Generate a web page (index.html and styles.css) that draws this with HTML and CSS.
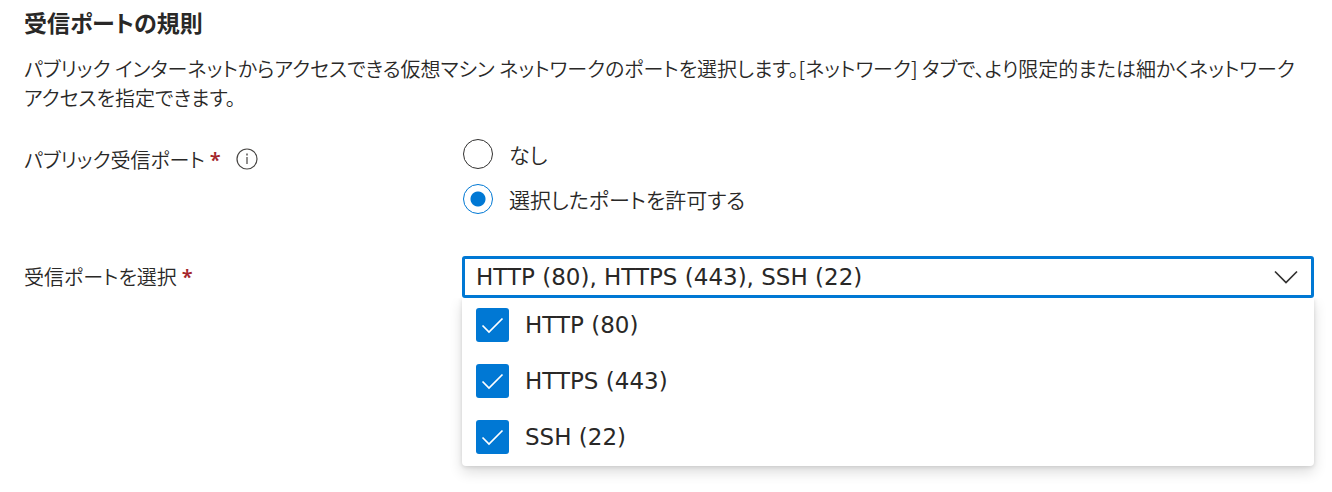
FILE: index.html
```
<!DOCTYPE html>
<html lang="ja">
<head>
    <meta charset="UTF-8">
    <meta name="viewport" content="width=device-width, initial-scale=1.0">
    <title>受信ポートの規則</title>
    <link rel="stylesheet" href="styles.css">
</head>
<body>

    <form class="ports">
        <h2>受信ポートの規則</h2>
        <p>パブリック インターネットからアクセスできる仮想マシン ネットワークのポートを選択します。[ネットワーク] タブで、より限定的または細かくネットワーク アクセスを指定できます。</p>

        <div class="row radio-row" role="radiogroup" aria-labelledby="publicLabel">
            <div class="label">
                <span id="publicLabel">パブリック受信ポート</span>
                <span class="required">*</span>
                <svg class="info" viewBox="0 0 22 22" fill="none" stroke="#484644">
                    <circle cx="11" cy="11" r="10" stroke-width="1.2"/>
                    <path d="M11 9v7" stroke-width="1.2"/>
                    <path d="M11 5.5v2" stroke-width="1.4"/>
                </svg>
            </div>
            <div class="radios">
                <label><input type="radio" name="publicPorts" value="none">なし</label>
                <label><input type="radio" name="publicPorts" value="allow" checked>選択したポートを許可する</label>
            </div>
        </div>

        <div class="row">
            <div class="label">
                <label for="portSelect">受信ポートを選択</label>
                <span class="required">*</span>
            </div>
            <div class="dropdown">
                <select id="portSelect">
                    <option>HTTP (80), HTTPS (443), SSH (22)</option>
                </select>
                <svg class="chevron" viewBox="0 0 24 14" fill="none" stroke="#323130" stroke-width="1.7">
                    <path d="M1 1.5l11 11 11-11"/>
                </svg>
                <div class="menu">
                    <label><input type="checkbox" checked>HTTP (80)</label>
                    <label><input type="checkbox" checked>HTTPS (443)</label>
                    <label><input type="checkbox" checked>SSH (22)</label>
                </div>
            </div>
        </div>
    </form>

</body>
</html>
```
FILE: styles.css
```
* {
    box-sizing: border-box;
}

body {
    margin: 0;
    background: #fff;
    color: #292827;
    font-family: "Noto Sans CJK JP", sans-serif;
    font-size: 20px;
    font-weight: 350;
    line-height: 29px;
    font-feature-settings: "palt";
}

.ports {
    padding: 8px 18px 26px 24px;
}

h2 {
    margin: 0;
    font-size: 23px;
    font-weight: 700;
    line-height: 28px;
}

p {
    margin: 18px 0 27px;
}

.row {
    display: flex;
}

.radio-row {
    margin-bottom: 42px;
}

.label {
    display: flex;
    align-items: center;
    gap: 5px;
    flex: 0 0 438px;
    height: 40px;
}

.required {
    color: #a4262c;
    font-family: "Noto Sans", sans-serif;
    font-weight: 600;
}

.info {
    width: 22px;
    height: 22px;
    margin-left: 10px;
}

.radios {
    display: flex;
    flex-direction: column;
    gap: 15px;
    padding-left: 1px;
    font-size: 21px;
}

.radios label,
.menu label {
    display: flex;
    align-items: center;
    gap: 16px;
}

.radios label {
    height: 30px;
}

input {
    appearance: none;
    flex: none;
    margin: 0;
}

input[type="radio"] {
    width: 30px;
    height: 30px;
    border: 1px solid #323130;
    border-radius: 50%;
}

input[type="radio"]:checked {
    border-color: #0078d4;
    background: radial-gradient(circle, #0078d4 7px, #fff 8px);
}

.dropdown {
    position: relative;
    flex: 1;
    font-family: "DejaVu Sans", sans-serif;
    font-size: 23px;
    font-weight: 400;
}

select {
    appearance: none;
    display: block;
    width: 100%;
    height: 42px;
    padding: 0 48px 0 11px;
    border: 3px solid #0078d4;
    border-radius: 3px;
    background: #fff;
    color: inherit;
    font: inherit;
}

.chevron {
    position: absolute;
    top: 14px;
    right: 16px;
    width: 24px;
    height: 14px;
    pointer-events: none;
}

.menu {
    background: #fff;
    border-radius: 0 0 4px 4px;
    box-shadow: 0 6px 14px rgba(0, 0, 0, 0.14), 0 1px 4px rgba(0, 0, 0, 0.12);
    clip-path: inset(0 -30px -30px -30px);
}

.menu label {
    height: 56px;
    padding: 0 14px 2px;
}

input[type="checkbox"] {
    width: 33px;
    height: 34px;
    border-radius: 3px;
    background: #0078d4;
}

input[type="checkbox"]:checked {
    background: #0078d4 url("data:image/svg+xml,%3Csvg xmlns='http://www.w3.org/2000/svg' viewBox='0 0 33 34' fill='none' stroke='white' stroke-width='1.7'%3E%3Cpath d='M6.500 17.500l6.500 6.500 13.500-13.500'/%3E%3C/svg%3E") center / 33px 34px;
}
```
